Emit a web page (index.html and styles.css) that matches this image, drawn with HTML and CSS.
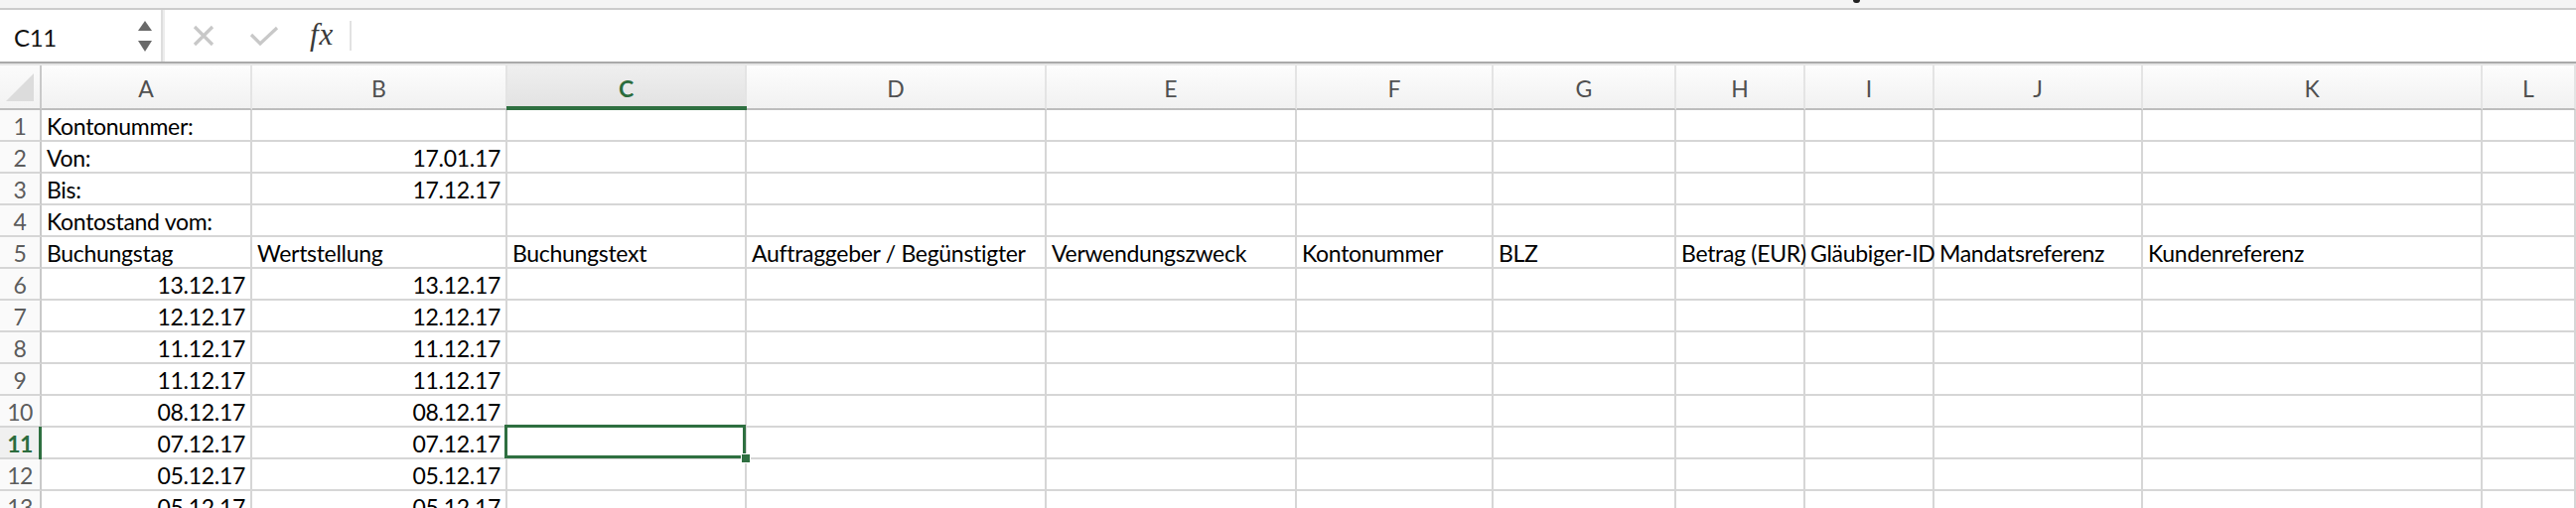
FILE: index.html
```html
<!DOCTYPE html>
<html lang="de">
<head>
<meta charset="utf-8">
<title>Kontoauszug</title>
<link rel="stylesheet" href="styles.css">
</head>
<body>
<div class="app">
  <div class="topstrip"><span class="mark"></span></div>
  <div class="fbar">
    <div class="namebox">
      <span class="nb-text">C11</span>
      <span class="nb-arrows">
        <svg width="16" height="34" viewBox="0 0 16 34"><path d="M8 1 L15 11 L1 11 Z" fill="#6a6a6a"/><path d="M1 21 L15 21 L8 32 Z" fill="#6a6a6a"/></svg>
      </span>
    </div>
    <div class="fb-sep"></div>
    <div class="fb-icons">
      <svg class="ic-x" width="24" height="22" viewBox="0 0 24 22"><path d="M3 2 L21 20 M21 2 L3 20" stroke="#c8c8c8" stroke-width="3.2" fill="none"/></svg>
      <svg class="ic-ok" width="30" height="22" viewBox="0 0 30 22"><path d="M2 10 L11 19 L28 3" stroke="#c8c8c8" stroke-width="3.2" fill="none"/></svg>
      <span class="fx">fx</span>
      <span class="fb-bar"></span>
    </div>
    <div class="fb-input"></div>
  </div>
  <div class="fb-bottom"></div>
  <div class="sheet">
    <div class="corner"><svg width="30" height="30" viewBox="0 0 30 30"><path d="M29 1 L29 29 L1 29 Z" fill="#dcdcdc"/></svg></div>
    <div class="ch">A</div><div class="ch">B</div><div class="ch sel">C</div><div class="ch">D</div><div class="ch">E</div><div class="ch">F</div><div class="ch">G</div><div class="ch">H</div><div class="ch">I</div><div class="ch">J</div><div class="ch">K</div><div class="ch">L</div>

    <div class="rh">1</div><div class="c">Kontonummer:</div><div class="c"></div><div class="c"></div><div class="c"></div><div class="c"></div><div class="c"></div><div class="c"></div><div class="c"></div><div class="c"></div><div class="c"></div><div class="c"></div><div class="c"></div>
    <div class="rh">2</div><div class="c">Von:</div><div class="c r">17.01.17</div><div class="c"></div><div class="c"></div><div class="c"></div><div class="c"></div><div class="c"></div><div class="c"></div><div class="c"></div><div class="c"></div><div class="c"></div><div class="c"></div>
    <div class="rh">3</div><div class="c">Bis:</div><div class="c r">17.12.17</div><div class="c"></div><div class="c"></div><div class="c"></div><div class="c"></div><div class="c"></div><div class="c"></div><div class="c"></div><div class="c"></div><div class="c"></div><div class="c"></div>
    <div class="rh">4</div><div class="c">Kontostand vom:</div><div class="c"></div><div class="c"></div><div class="c"></div><div class="c"></div><div class="c"></div><div class="c"></div><div class="c"></div><div class="c"></div><div class="c"></div><div class="c"></div><div class="c"></div>
    <div class="rh">5</div><div class="c">Buchungstag</div><div class="c">Wertstellung</div><div class="c">Buchungstext</div><div class="c">Auftraggeber / Begünstigter</div><div class="c">Verwendungszweck</div><div class="c">Kontonummer</div><div class="c">BLZ</div><div class="c">Betrag (EUR)</div><div class="c">Gläubiger-ID</div><div class="c">Mandatsreferenz</div><div class="c">Kundenreferenz</div><div class="c"></div>
    <div class="rh">6</div><div class="c r">13.12.17</div><div class="c r">13.12.17</div><div class="c"></div><div class="c"></div><div class="c"></div><div class="c"></div><div class="c"></div><div class="c"></div><div class="c"></div><div class="c"></div><div class="c"></div><div class="c"></div>
    <div class="rh">7</div><div class="c r">12.12.17</div><div class="c r">12.12.17</div><div class="c"></div><div class="c"></div><div class="c"></div><div class="c"></div><div class="c"></div><div class="c"></div><div class="c"></div><div class="c"></div><div class="c"></div><div class="c"></div>
    <div class="rh">8</div><div class="c r">11.12.17</div><div class="c r">11.12.17</div><div class="c"></div><div class="c"></div><div class="c"></div><div class="c"></div><div class="c"></div><div class="c"></div><div class="c"></div><div class="c"></div><div class="c"></div><div class="c"></div>
    <div class="rh">9</div><div class="c r">11.12.17</div><div class="c r">11.12.17</div><div class="c"></div><div class="c"></div><div class="c"></div><div class="c"></div><div class="c"></div><div class="c"></div><div class="c"></div><div class="c"></div><div class="c"></div><div class="c"></div>
    <div class="rh">10</div><div class="c r">08.12.17</div><div class="c r">08.12.17</div><div class="c"></div><div class="c"></div><div class="c"></div><div class="c"></div><div class="c"></div><div class="c"></div><div class="c"></div><div class="c"></div><div class="c"></div><div class="c"></div>
    <div class="rh sel">11</div><div class="c r">07.12.17</div><div class="c r">07.12.17</div><div class="c active"><span class="handle"></span></div><div class="c"></div><div class="c"></div><div class="c"></div><div class="c"></div><div class="c"></div><div class="c"></div><div class="c"></div><div class="c"></div><div class="c"></div>
    <div class="rh">12</div><div class="c r">05.12.17</div><div class="c r">05.12.17</div><div class="c"></div><div class="c"></div><div class="c"></div><div class="c"></div><div class="c"></div><div class="c"></div><div class="c"></div><div class="c"></div><div class="c"></div><div class="c"></div>
    <div class="rh">13</div><div class="c r">05.12.17</div><div class="c r">05.12.17</div><div class="c"></div><div class="c"></div><div class="c"></div><div class="c"></div><div class="c"></div><div class="c"></div><div class="c"></div><div class="c"></div><div class="c"></div><div class="c"></div>
  </div>
</div>
</body>
</html>
```

FILE: styles.css
```css
* { box-sizing: border-box; }
html, body { margin: 0; padding: 0; }
body {
  width: 2594px;
  height: 512px;
  overflow: hidden;
  background: #ffffff;
  font-family: Lato, "Liberation Sans", sans-serif;
  color: #000;
}
.app { width: 2594px; height: 512px; overflow: hidden; }

.topstrip {
  height: 10px;
  background: #f4f4f4;
  border-bottom: 2px solid #cbcbcb;
  position: relative;
}
.mark {
  position: absolute;
  left: 1866px;
  top: 0;
  width: 7px;
  height: 3px;
  background: #222;
  border-radius: 0 0 3px 3px;
}

.fbar {
  height: 52px;
  display: flex;
  align-items: stretch;
  background: #fff;
}
.namebox {
  width: 162px;
  display: flex;
  align-items: center;
  justify-content: space-between;
  padding: 0 8px 0 14px;
}
.nb-text {
  font-size: 24px;
  color: #111;
  padding-top: 2px;
  letter-spacing: -0.3px;
}
.nb-arrows { display: flex; align-items: center; padding-top: 2px; }
.fb-sep {
  width: 4px;
  border-left: 2px solid #dedede;
  border-right: 2px solid #ececec;
}
.fb-icons {
  display: flex;
  align-items: center;
  padding-left: 27px;
}
.ic-x { margin-right: 34px; }
.ic-ok { margin-right: 31px; }
.fx {
  font-family: "Liberation Serif", "DejaVu Serif", serif;
  font-style: italic;
  font-size: 31px;
  color: #3a3a3a;
  margin-right: 16px;
  padding-bottom: 2px;
  letter-spacing: 1px;
}
.fb-bar {
  width: 2px;
  height: 30px;
  background: #e2e2e2;
}
.fb-input { flex: 1; }

.fb-bottom {
  height: 4px;
  border-top: 2px solid #a9a9a9;
  background: #e6e6e6;
}

.sheet {
  display: grid;
  grid-template-columns: 42px 212px 257px 241px 302px 252px 198px 184px 130px 130px 210px 342px 1fr;
  grid-template-rows: 45px repeat(13, 32px);
}

.corner {
  background: linear-gradient(#fbfbfb, #f2f2f2);
  border-right: 2px solid #c9c9c9;
  border-bottom: 2px solid #bdbdbd;
  display: flex;
  align-items: flex-end;
  justify-content: flex-end;
  padding: 0 5px 6px 0;
}

.ch {
  background: linear-gradient(#fdfdfd, #f1f1f1);
  border-right: 2px solid #e4e4e4;
  border-bottom: 2px solid #bdbdbd;
  font-size: 23px;
  color: #505050;
  text-align: center;
  line-height: 42px;
  padding-top: 2px;
  position: relative;
}
.ch.sel {
  background: linear-gradient(#efefef, #e2e2e2);
  color: #2b6c3d;
  font-weight: bold;
}
.ch.sel::after {
  content: "";
  position: absolute;
  left: -1px;
  right: -2px;
  bottom: -2px;
  height: 4px;
  background: #2e6f40;
}

.rh {
  background: #fafafa;
  border-right: 2px solid #c9c9c9;
  border-bottom: 2px solid #d6d6d6;
  font-size: 23px;
  color: #5c5c5c;
  text-align: center;
  line-height: 30px;
  padding-top: 1px;
  letter-spacing: -0.5px;
  position: relative;
}
.rh.sel {
  color: #2b6c3d;
  font-weight: bold;
  background: #f0f0f0;
}
.rh.sel::after {
  content: "";
  position: absolute;
  top: -1px;
  bottom: -2px;
  right: -2px;
  width: 3px;
  background: #2e6f40;
}

.c {
  border-right: 2px solid #d6d6d6;
  border-bottom: 2px solid #d6d6d6;
  font-size: 23px;
  letter-spacing: -0.3px;
  line-height: 30px;
  padding: 1px 5px 0 5px;
  white-space: nowrap;
  color: #000;
  position: relative;
}
.c.r { text-align: right; }

.c.active { position: relative; overflow: visible; }
.c.active::before {
  content: "";
  position: absolute;
  left: -3px;
  top: -3px;
  right: -1px;
  bottom: -1px;
  border: 3px solid #2e6f40;
}
.handle {
  position: absolute;
  right: -6px;
  bottom: -6px;
  width: 10px;
  height: 10px;
  background: #2e6f40;
  border: 1px solid #fff;
  z-index: 2;
}
```
